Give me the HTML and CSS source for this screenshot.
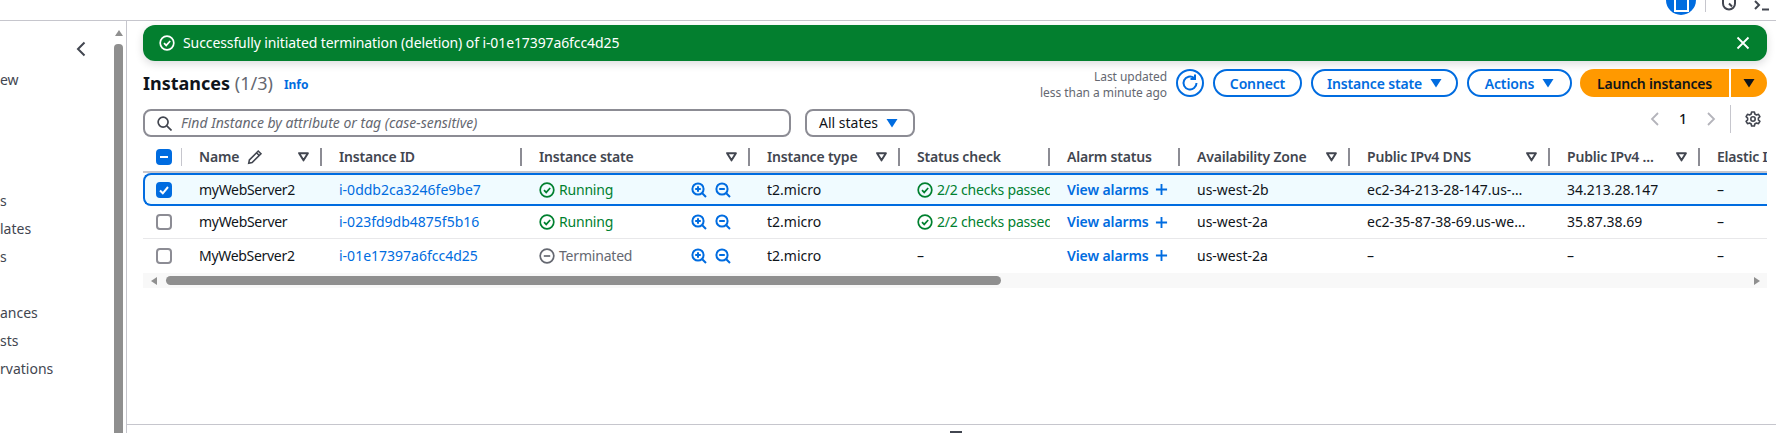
FILE: index.html
```html
<!DOCTYPE html>
<html lang="en">
<head>
    <meta charset="UTF-8">
    <title>Instances | EC2</title>
    <link rel="stylesheet" href="styles.css">
</head>
<body>
    <svg class="defs" width="0" height="0">
        <symbol id="ok" viewBox="0 0 16 16"><circle cx="8" cy="8" r="6.8" fill="none" stroke="currentColor" stroke-width="1.7"/><path d="M5 8.2l2.2 2.2L11.2 6" fill="none" stroke="currentColor" stroke-width="1.7"/></symbol>
        <symbol id="stop" viewBox="0 0 16 16"><circle cx="8" cy="8" r="6.8" fill="none" stroke="currentColor" stroke-width="1.7"/><path d="M4.8 8h6.4" fill="none" stroke="currentColor" stroke-width="1.7"/></symbol>
        <symbol id="zoomin" viewBox="0 0 16 16"><circle cx="7" cy="7" r="5.6" fill="none" stroke="currentColor" stroke-width="2"/><path d="M11 11l4 4M4.2 7h5.6M7 4.2v5.6" fill="none" stroke="currentColor" stroke-width="2"/></symbol>
        <symbol id="zoomout" viewBox="0 0 16 16"><circle cx="7" cy="7" r="5.6" fill="none" stroke="currentColor" stroke-width="2"/><path d="M11 11l4 4M4.2 7h5.6" fill="none" stroke="currentColor" stroke-width="2"/></symbol>
        <symbol id="plus" viewBox="0 0 14 14"><path d="M7 1v12M1 7h12" fill="none" stroke="currentColor" stroke-width="2"/></symbol>
        <symbol id="filter" viewBox="0 0 10 10"><path d="M1 2h8L5 8.5z" fill="none" stroke="currentColor" stroke-width="1.8" stroke-linejoin="round"/></symbol>
        <symbol id="caret" viewBox="0 0 12 10"><path d="M0.5 1h11L6 9.5z" fill="currentColor"/></symbol>
    </svg>

    <header class="topbar">
        <span class="avatar"><span class="avatar-box"></span></span>
        <span class="topbar-sep"></span>
        <svg class="top-icon" width="16" height="12" viewBox="0 0 16 12"><path d="M2 0v3.500a6 6 0 0 0 12 0V0M8 3.500l3 3" fill="none" stroke="#424650" stroke-width="2"/></svg>
        <svg class="top-icon top-term" width="16" height="12" viewBox="0 0 16 12"><path d="M1 1l4 4-4 4M8 9.500h7" fill="none" stroke="#424650" stroke-width="2"/></svg>
    </header>

    <div class="page">
        <aside class="sidebar">
            <div class="nav">
                <div class="nav-close"><svg width="10" height="16" viewBox="0 0 10 16"><path d="M8.500 1.500L2 8l6.500 6.500" fill="none" stroke="#424650" stroke-width="2"/></svg></div>
                <div class="nav-item nav-first">ew</div>
                <div class="nav-item nav-gap">s</div>
                <div class="nav-item">lates</div>
                <div class="nav-item">s</div>
                <div class="nav-item nav-skip">ances</div>
                <div class="nav-item">sts</div>
                <div class="nav-item">rvations</div>
            </div>
            <div class="side-scroll">
                <span class="arrow-up"></span>
                <span class="side-thumb"></span>
            </div>
        </aside>

        <main class="main">
            <div class="content">
                <div class="flash">
                    <svg class="flash-icon" width="16" height="16"><use href="#ok"/></svg>
                    <span class="flash-text">Successfully initiated termination (deletion) of i-01e17397a6fcc4d25</span>
                    <svg class="flash-close" width="14" height="14" viewBox="0 0 14 14"><path d="M1.500 1.500l11 11M12.500 1.500l-11 11" fill="none" stroke="#fff" stroke-width="1.800"/></svg>
                </div>

                <div class="toolbar">
                    <h1>Instances <span class="count">(1/3)</span></h1>
                    <a class="info">Info</a>
                    <div class="updated">Last updated<br>less than a minute ago</div>
                    <button class="btn btn-icon"><svg width="18" height="18" viewBox="0 0 18 18"><path d="M15.500 9A6.500 6.500 0 1 1 13 3.900" fill="none" stroke="currentColor" stroke-width="2"/><path d="M14 0.500v4.500H9.500" fill="none" stroke="currentColor" stroke-width="2"/></svg></button>
                    <button class="btn btn-connect">Connect</button>
                    <button class="btn btn-state">Instance state <svg width="12" height="10"><use href="#caret"/></svg></button>
                    <button class="btn btn-actions">Actions <svg width="12" height="10"><use href="#caret"/></svg></button>
                    <div class="launch">
                        <button class="launch-main">Launch instances</button>
                        <button class="launch-caret"><svg width="12" height="10"><use href="#caret"/></svg></button>
                    </div>
                </div>

                <div class="filters">
                    <div class="search">
                        <svg width="15" height="15" viewBox="0 0 16 16"><circle cx="6.500" cy="6.500" r="5.300" fill="none" stroke="#424650" stroke-width="1.800"/><path d="M10.500 10.500l5 5" fill="none" stroke="#424650" stroke-width="1.800"/></svg>
                        <span>Find Instance by attribute or tag (case-sensitive)</span>
                    </div>
                    <div class="select">All states <svg width="12" height="10"><use href="#caret"/></svg></div>
                    <div class="pager">
                        <svg width="10" height="14" viewBox="0 0 10 14"><path d="M8 1L2 7l6 6" fill="none" stroke="#b4b4bb" stroke-width="1.800"/></svg>
                        <span class="page-num">1</span>
                        <svg width="10" height="14" viewBox="0 0 10 14"><path d="M2 1l6 6-6 6" fill="none" stroke="#b4b4bb" stroke-width="1.800"/></svg>
                        <span class="pager-sep"></span>
                        <svg class="gear" width="16" height="16" viewBox="0 0 16 16"><path d="M6.600 1h2.800l.4 2 1.700 1 2-.7 1.400 2.400-1.500 1.400v1.800l1.500 1.400-1.400 2.400-2-.7-1.700 1-.4 2H6.600l-.4-2-1.700-1-2 .7L1.100 10.300l1.500-1.400V7.100L1.100 5.700l1.400-2.400 2 .7 1.700-1z" fill="none" stroke="#424650" stroke-width="1.600" stroke-linejoin="round"/><circle cx="8" cy="8" r="2.200" fill="none" stroke="#424650" stroke-width="1.600"/></svg>
                    </div>
                </div>

                <div class="table-wrap">
                    <table class="instances">
                        <colgroup>
                            <col class="c-check"><col class="c-name"><col class="c-id"><col class="c-state"><col class="c-type"><col class="c-status"><col class="c-alarm"><col class="c-zone"><col class="c-dns"><col class="c-ip"><col class="c-eip">
                        </colgroup>
                        <thead>
                            <tr>
                                <th><div class="th-first"><span class="check check-on"><span class="dash"></span></span></div></th>
                                <th><div class="th-in"><span class="th-label">Name <svg width="16" height="16" viewBox="0 0 14 14"><path d="M1.500 12.500l.6-3L9.800 1.800l2.400 2.400-7.700 7.700zM8.300 3.300l2.400 2.400" fill="none" stroke="#424650" stroke-width="1.400"/></svg></span><svg class="filter" width="11" height="11"><use href="#filter"/></svg></div></th>
                                <th><div class="th-in"><span class="th-label">Instance ID</span></div></th>
                                <th><div class="th-in"><span class="th-label">Instance state</span><svg class="filter" width="11" height="11"><use href="#filter"/></svg></div></th>
                                <th><div class="th-in"><span class="th-label">Instance type</span><svg class="filter" width="11" height="11"><use href="#filter"/></svg></div></th>
                                <th><div class="th-in"><span class="th-label">Status check</span></div></th>
                                <th><div class="th-in"><span class="th-label">Alarm status</span></div></th>
                                <th><div class="th-in"><span class="th-label">Availability Zone</span><svg class="filter" width="11" height="11"><use href="#filter"/></svg></div></th>
                                <th><div class="th-in"><span class="th-label">Public IPv4 DNS</span><svg class="filter" width="11" height="11"><use href="#filter"/></svg></div></th>
                                <th><div class="th-in"><span class="th-label">Public IPv4 ...</span><svg class="filter" width="11" height="11"><use href="#filter"/></svg></div></th>
                                <th><div class="th-in th-last"><span class="th-label">Elastic IP</span></div></th>
                            </tr>
                        </thead>
                        <tbody>
                            <tr class="selected">
                                <td class="td-check"><span class="check check-on"><svg width="12" height="12" viewBox="0 0 12 12"><path d="M2 6.500l2.800 2.800L10 3" fill="none" stroke="#fff" stroke-width="2"/></svg></span></td>
                                <td class="td-name">myWebServer2</td>
                                <td><a>i-0ddb2ca3246fe9be7</a></td>
                                <td><div class="state running"><svg width="16" height="16"><use href="#ok"/></svg>Running<span class="zooms"><svg width="16" height="16"><use href="#zoomin"/></svg><svg width="16" height="16"><use href="#zoomout"/></svg></span></div></td>
                                <td>t2.micro</td>
                                <td><div class="state running"><svg width="16" height="16"><use href="#ok"/></svg>2/2 checks passed</div></td>
                                <td><a class="alarm">View alarms <svg width="13" height="13"><use href="#plus"/></svg></a></td>
                                <td>us-west-2b</td>
                                <td>ec2-34-213-28-147.us-…</td>
                                <td>34.213.28.147</td>
                                <td>–</td>
                            </tr>
                            <tr>
                                <td class="td-check"><span class="check"></span></td>
                                <td class="td-name">myWebServer</td>
                                <td><a>i-023fd9db4875f5b16</a></td>
                                <td><div class="state running"><svg width="16" height="16"><use href="#ok"/></svg>Running<span class="zooms"><svg width="16" height="16"><use href="#zoomin"/></svg><svg width="16" height="16"><use href="#zoomout"/></svg></span></div></td>
                                <td>t2.micro</td>
                                <td><div class="state running"><svg width="16" height="16"><use href="#ok"/></svg>2/2 checks passed</div></td>
                                <td><a class="alarm">View alarms <svg width="13" height="13"><use href="#plus"/></svg></a></td>
                                <td>us-west-2a</td>
                                <td>ec2-35-87-38-69.us-we…</td>
                                <td>35.87.38.69</td>
                                <td>–</td>
                            </tr>
                            <tr class="last">
                                <td class="td-check"><span class="check"></span></td>
                                <td class="td-name">MyWebServer2</td>
                                <td><a>i-01e17397a6fcc4d25</a></td>
                                <td><div class="state stopped"><svg width="16" height="16"><use href="#stop"/></svg>Terminated<span class="zooms"><svg width="16" height="16"><use href="#zoomin"/></svg><svg width="16" height="16"><use href="#zoomout"/></svg></span></div></td>
                                <td>t2.micro</td>
                                <td>–</td>
                                <td><a class="alarm">View alarms <svg width="13" height="13"><use href="#plus"/></svg></a></td>
                                <td>us-west-2a</td>
                                <td>–</td>
                                <td>–</td>
                                <td>–</td>
                            </tr>
                        </tbody>
                    </table>
                </div>

                <div class="h-scroll">
                    <span class="arrow-left"></span>
                    <span class="h-thumb"></span>
                    <span class="arrow-right"></span>
                </div>
            </div>

            <div class="split-panel"><span class="handle"></span></div>
        </main>
    </div>
</body>
</html>
```

FILE: styles.css
```css
* {
    box-sizing: border-box;
}
html, body {
    height: 100%;
}
body {
    margin: 0;
    overflow: hidden;
    background-color: #fff;
    color: #0f141a;
    font-family: "Noto Sans", sans-serif;
    font-size: 14px;
    line-height: 20px;
}
.defs {
    display: block;
    height: 0;
}
svg {
    flex: none;
}
button {
    font-family: inherit;
}

/* top bar, only its lower edge shows */
.topbar {
    height: 21px;
    border-bottom: 1px solid #c6c6cd;
    display: flex;
    align-items: flex-start;
    justify-content: flex-end;
    overflow: hidden;
}
.avatar {
    width: 30px;
    height: 30px;
    margin-top: -15px;
    border-radius: 50%;
    background-color: #006ce0;
    display: flex;
    align-items: center;
    justify-content: center;
}
.avatar-box {
    width: 15px;
    height: 14px;
    margin-top: 10px;
    border: 2px solid #fff;
    background-color: #006ce0;
}
.topbar-sep {
    width: 1px;
    height: 12px;
    margin-left: 9px;
    background-color: #c6c6cd;
}
.top-icon {
    margin-left: 15px;
}
.top-term {
    margin-left: 17px;
    margin-right: 6px;
}

.page {
    display: flex;
    height: 412px;
}

/* side navigation, mostly scrolled off to the left */
.sidebar {
    width: 127px;
    flex: none;
    display: flex;
    border-right: 1px solid #c6c6cd;
    padding-right: 3px;
    overflow: hidden;
}
.nav {
    flex: 1;
    color: #424650;
}
.nav-close {
    height: 20px;
    margin-top: 20px;
    padding-left: 76px;
}
.nav-item {
    height: 28px;
    line-height: 28px;
}
.nav-first {
    margin-top: 5px;
}
.nav-gap {
    margin-top: 93px;
}
.nav-skip {
    margin-top: 28px;
}
.side-scroll {
    width: 9px;
    display: flex;
    flex-direction: column;
    align-items: center;
    padding-top: 9px;
}
.arrow-up {
    width: 0;
    height: 0;
    border-left: 4px solid transparent;
    border-right: 4px solid transparent;
    border-bottom: 6px solid #8f8f8f;
}
.side-thumb {
    width: 9px;
    flex: 1;
    margin-top: 8px;
    border-radius: 4px 4px 0 0;
    background-color: #8f8f8f;
}

.main {
    flex: 1;
    min-width: 0;
    display: flex;
    flex-direction: column;
}
.content {
    flex: 1;
    padding: 4px 9px 0 16px;
    min-height: 0;
}

/* green flash message */
.flash {
    height: 36px;
    border-radius: 12px;
    background-color: #037f2f;
    color: #fff;
    display: flex;
    align-items: center;
    padding: 0 16px;
    box-shadow: 0 3px 8px rgba(0, 7, 22, 0.14);
}
.flash-text {
    margin-left: 8px;
    flex: 1;
    letter-spacing: -0.1px;
}
.flash-close {
    margin-right: 1px;
}

/* title and actions */
.toolbar {
    display: flex;
    align-items: center;
    height: 28px;
    margin-top: 8px;
}
h1 {
    margin: 0;
    font-size: 18px;
    line-height: 28px;
    font-weight: 700;
}
.count {
    color: #656871;
    font-weight: 400;
}
.info {
    margin-left: 11px;
    margin-top: 3px;
    color: #006ce0;
    font-size: 12px;
    font-weight: 700;
}
.updated {
    margin-left: auto;
    color: #656871;
    font-size: 12px;
    line-height: 16px;
    text-align: right;
    margin-top: 4px;
    letter-spacing: -0.05px;
}
.btn {
    height: 28px;
    border: 2px solid #006ce0;
    border-radius: 14px;
    background-color: #fff;
    color: #006ce0;
    font-size: 14px;
    font-weight: 600;
    letter-spacing: -0.15px;
    display: flex;
    align-items: center;
    justify-content: center;
    gap: 8px;
    padding: 0;
    margin-left: 9px;
}
.btn-icon {
    width: 28px;
}
.btn-connect {
    width: 89px;
}
.btn-state {
    width: 147px;
}
.btn-actions {
    width: 105px;
}
.launch {
    display: flex;
    margin-left: 8px;
    height: 28px;
    gap: 2px;
}
.launch button {
    border: none;
    background-color: #ff9900;
    color: #0f141a;
    font-size: 14px;
    font-weight: 600;
    letter-spacing: -0.2px;
    padding: 0;
}
.launch-main {
    width: 149px;
    border-radius: 14px 0 0 14px;
}
.launch-caret {
    width: 36px;
    border-radius: 0 14px 14px 0;
    display: flex;
    align-items: center;
    justify-content: center;
}

/* search row */
.filters {
    display: flex;
    align-items: flex-start;
    margin-top: 12px;
    height: 28px;
}
.search {
    width: 648px;
    height: 28px;
    border: 2px solid #8c8c94;
    border-radius: 8px;
    display: flex;
    align-items: center;
    padding-left: 12px;
    gap: 9px;
    color: #656871;
    font-style: italic;
}
.select {
    width: 110px;
    height: 28px;
    margin-left: 14px;
    border: 2px solid #8c8c94;
    border-radius: 8px;
    display: flex;
    align-items: center;
    gap: 8px;
    padding-left: 12px;
    color: #0f141a;
}
.select svg {
    color: #006ce0;
}
.pager {
    margin-left: auto;
    display: flex;
    align-items: center;
    height: 28px;
    margin-top: -4px;
}
.page-num {
    width: 46px;
    text-align: center;
    font-weight: 500;
}
.pager-sep {
    width: 1px;
    height: 28px;
    margin-left: 14px;
    background-color: #c6c6cd;
}
.gear {
    margin: 0 6px 0 14px;
}

/* table */
.table-wrap {
    margin-top: 3px;
    overflow: hidden;
}
.instances {
    border-collapse: separate;
    border-spacing: 0;
    table-layout: fixed;
    width: 1707px;
}
.c-check { width: 39px; }
.c-name { width: 140px; }
.c-id { width: 200px; }
.c-state { width: 228px; }
.c-type { width: 150px; }
.c-status { width: 150px; }
.c-alarm { width: 130px; }
.c-zone { width: 170px; }
.c-dns { width: 200px; }
.c-ip { width: 150px; }
.c-eip { width: 150px; }
th {
    height: 33px;
    padding: 2px 0 0;
    border-bottom: 2px solid #c6c6cd;
    text-align: left;
    font-weight: 600;
    letter-spacing: -0.2px;
    color: #424650;
}
.th-first {
    height: 18px;
    padding-left: 13px;
    border-right: 1px solid #c6c6cd;
    display: flex;
    align-items: center;
}
.th-in {
    height: 18px;
    padding: 0 11px 0 17px;
    border-right: 2px solid #8c8c94;
    display: flex;
    align-items: center;
    justify-content: space-between;
    white-space: nowrap;
}
.th-last {
    border-right: none;
}
.th-label {
    display: flex;
    align-items: center;
    gap: 4px;
    white-space: pre;
}
.filter {
    color: #424650;
}
td {
    height: 33px;
    padding: 0 0 0 17px;
    border-bottom: 1px solid #e8e8ea;
    white-space: nowrap;
    overflow: hidden;
}
tr.last td {
    border-bottom: none;
}
td a {
    color: #006ce0;
}
.td-check {
    padding-left: 13px;
}
.td-name {
    letter-spacing: -0.3px;
}
.selected td {
    background-color: #f0fbff;
    border-top: 2px solid #006ce0;
    border-bottom: 2px solid #006ce0;
}
.selected td:first-child {
    border-left: 2px solid #006ce0;
    border-radius: 8px 0 0 8px;
    padding-left: 11px;
}
.check {
    width: 16px;
    height: 16px;
    border: 2px solid #8c8c94;
    border-radius: 4px;
    display: flex;
    align-items: center;
    justify-content: center;
}
.check-on {
    background-color: #006ce0;
    border-color: #006ce0;
}
.dash {
    width: 8px;
    height: 2px;
    background-color: #fff;
}
.state {
    display: flex;
    align-items: center;
    gap: 4px;
    letter-spacing: -0.2px;
}
.running {
    color: #00802f;
}
.stopped {
    color: #656871;
}
.zooms {
    margin-left: auto;
    margin-right: 19px;
    display: flex;
    gap: 8px;
    color: #006ce0;
}
.alarm {
    display: flex;
    align-items: center;
    gap: 6px;
    font-weight: 600;
    letter-spacing: -0.1px;
}

/* horizontal scrollbar under the table */
.h-scroll {
    height: 15px;
    margin-top: 1px;
    background-color: #f8f8f8;
    display: flex;
    align-items: center;
    justify-content: space-between;
    padding: 0 7px 0 8px;
}
.arrow-left {
    width: 0;
    height: 0;
    border-top: 4px solid transparent;
    border-bottom: 4px solid transparent;
    border-right: 6px solid #8f8f8f;
}
.arrow-right {
    width: 0;
    height: 0;
    border-top: 4px solid transparent;
    border-bottom: 4px solid transparent;
    border-left: 6px solid #8f8f8f;
}
.h-thumb {
    width: 835px;
    height: 9px;
    margin-left: 9px;
    margin-right: auto;
    border-radius: 5px;
    background-color: #8f8f8f;
}

/* closed split panel along the bottom */
.split-panel {
    height: 9px;
    flex: none;
    border-top: 1px solid #c6c6cd;
    display: flex;
    justify-content: center;
    align-items: flex-end;
    padding-left: 8px;
}
.handle {
    width: 12px;
    height: 2px;
    background-color: #424650;
}
```
